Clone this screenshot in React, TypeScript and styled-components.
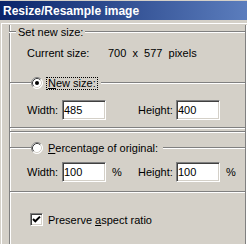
import React from "react";
import styled, { createGlobalStyle } from "styled-components";

const GlobalStyle = createGlobalStyle`
  html, body {
    margin: 0;
    padding: 0;
    background: #d4d0c8;
  }
  body {
    font-family: "Liberation Sans", Arial, sans-serif;
    font-size: 11px;
    color: #000;
    overflow: hidden;
  }
`;

const Window = styled.div`
  width: 247px;
  height: 244px;
  overflow: hidden;
  background: #d4d0c8;
`;

const TitleBar = styled.div`
  height: 19px;
  margin-top: 1px;
  padding-left: 3px;
  display: flex;
  align-items: center;
  background: linear-gradient(to right, #0a246a, #5b7dbd);
  color: #fff;
  font-weight: 700;
  font-size: 12px;
  white-space: nowrap;
`;

const Panel = styled.div`
  margin: 3px 0 0 1px;
  border-top: 1px solid #fff;
  border-left: 1px solid #fff;
`;

const Group = styled.div`
  margin: 8px 1px 0 7px;
  border-left: 1px solid #808080;
  border-right: 1px solid #808080;
  box-shadow: inset 1px 0 0 #fff, 1px 0 0 #fff;
  padding-bottom: 40px;
`;

const Header = styled.div<{ $top: number }>`
  display: flex;
  align-items: center;
  height: 14px;
  margin-top: ${(p) => p.$top}px;
  white-space: nowrap;
`;

const Etch = styled.div<{ $w?: number; $top?: number; $shift?: number }>`
  height: 0;
  border-top: 1px solid #808080;
  border-bottom: 1px solid #fff;
  flex: ${(p) => (p.$w ? `0 0 ${p.$w}px` : "1 1 auto")};
  margin-top: ${(p) => p.$top || 0}px;
  margin-left: ${(p) => p.$shift || 0}px;
`;

const Legend = styled.span`
  padding: 0 2px;
  line-height: 13px;
`;

const InfoRow = styled.div`
  display: flex;
  align-items: center;
  height: 14px;
  margin-top: 7px;
  padding-left: 17px;
`;

const InfoLabel = styled.span`
  width: 81px;
`;

const OptionLabel = styled.span<{ $focus?: boolean }>`
  margin: 0 3px 0 3px;
  padding: 0 1px;
  line-height: 11px;
  border: 1px dotted ${(p) => (p.$focus ? "#000" : "transparent")};
`;

const FieldRow = styled.div<{ $top: number }>`
  display: grid;
  grid-template-columns: 35px 44px 32px 38px 44px auto;
  align-items: center;
  height: 20px;
  margin-top: ${(p) => p.$top}px;
  padding-left: 17px;
`;

const Field = styled.input`
  box-sizing: border-box;
  width: 44px;
  height: 20px;
  margin: 0;
  padding: 0 1px;
  border: 1px solid;
  border-color: #808080 #fff #fff #808080;
  box-shadow: inset 1px 1px 0 #404040, inset -1px -1px 0 #d4d0c8;
  background: #fff;
  font-family: "Liberation Sans", Arial, sans-serif;
  font-size: 11px;
  color: #000;
  outline: none;
`;

const Unit = styled.span`
  padding-left: 6px;
`;

const CheckRow = styled.div`
  display: flex;
  align-items: center;
  height: 13px;
  margin-top: 20px;
  padding-left: 20px;
`;

const CheckBox = styled.span`
  box-sizing: border-box;
  display: flex;
  width: 13px;
  height: 13px;
  border: 1px solid;
  border-color: #808080 #fff #fff #808080;
  box-shadow: inset 1px 1px 0 #404040, inset -1px -1px 0 #d4d0c8;
  background: #fff;
  padding: 1px;
`;

const CheckText = styled.span`
  margin-left: 5px;
`;

const RadioMark = ({ checked }: { checked?: boolean }) => (
  <svg width="12" height="12" viewBox="0 0 12 12" style={{ flex: "0 0 12px" }}>
    <circle cx="6" cy="6" r="5.5" fill="#fff" />
    <path d="M2.11 9.89 A5.5 5.5 0 0 1 9.89 2.11" fill="none" stroke="#808080" />
    <path d="M9.89 2.11 A5.5 5.5 0 0 1 2.11 9.89" fill="none" stroke="#fff" />
    <path d="M2.82 9.18 A4.5 4.5 0 0 1 9.18 2.82" fill="none" stroke="#404040" />
    <path d="M9.18 2.82 A4.5 4.5 0 0 1 2.82 9.18" fill="none" stroke="#d4d0c8" />
    {checked && <circle cx="6" cy="6" r="2" fill="#000" />}
  </svg>
);

const App = () => {
  return (
    <Window>
      <GlobalStyle />
      <TitleBar>Resize/Resample image</TitleBar>
      <Panel>
        <Group>
          <Header $top={-7}>
            <Etch $w={7} $shift={-1} />
            <Legend>Set new size:</Legend>
            <Etch />
          </Header>
          <InfoRow>
            <InfoLabel>Current size:</InfoLabel>
            <span>700&nbsp; x &nbsp;577&nbsp; pixels</span>
          </InfoRow>

          <Header $top={16}>
            <Etch $w={21} />
            <RadioMark checked />
            <OptionLabel $focus>
              <u>N</u>ew size:
            </OptionLabel>
            <Etch />
          </Header>
          <FieldRow $top={10}>
            <span>Width:</span>
            <Field readOnly value="485" />
            <span />
            <span>Height:</span>
            <Field readOnly value="400" />
          </FieldRow>
          <Etch $top={7} />
          <Etch $top={2} />

          <Header $top={8}>
            <Etch $w={21} />
            <RadioMark />
            <OptionLabel>
              <u>P</u>ercentage of original:
            </OptionLabel>
            <Etch />
          </Header>
          <FieldRow $top={7}>
            <span>Width:</span>
            <Field readOnly value="100" />
            <Unit>%</Unit>
            <span>Height:</span>
            <Field readOnly value="100" />
            <Unit>%</Unit>
          </FieldRow>
          <Etch $top={9} />

          <CheckRow>
            <CheckBox>
              <svg width="9" height="9" viewBox="0 0 9 9">
                <path d="M1 4 L3.3 6.3 L8 1.6" fill="none" stroke="#000" strokeWidth="2" />
              </svg>
            </CheckBox>
            <CheckText>
              Preserve <u>a</u>spect ratio
            </CheckText>
          </CheckRow>
        </Group>
      </Panel>
    </Window>
  );
};

export default App;
